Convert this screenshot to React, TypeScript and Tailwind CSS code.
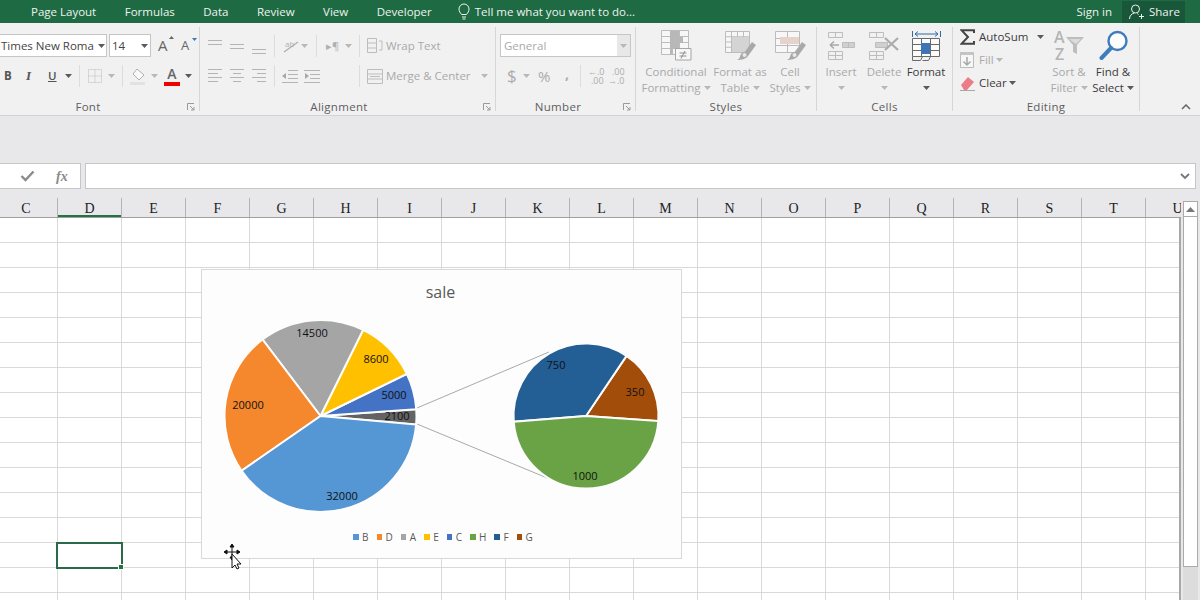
import type { ReactNode } from 'react';

// ── Data ──────────────────────────────────────────────────────────────────────

const TABS = ['Page Layout', 'Formulas', 'Data', 'Review', 'View', 'Developer'];
const COLUMNS = ['D', 'E', 'F', 'G', 'H', 'I', 'J', 'K', 'L', 'M', 'N', 'O', 'P', 'Q', 'R', 'S', 'T', 'U'];

const MAIN_SLICES = [
  { value: 2100, color: '#636363' },
  { value: 5000, color: '#4472c4' },
  { value: 8600, color: '#ffc000' },
  { value: 14500, color: '#a5a5a5' },
  { value: 20000, color: '#f5882c' },
  { value: 32000, color: '#5596d4' },
];
const SIDE_SLICES = [
  { value: 350, color: '#a34d0b' },
  { value: 750, color: '#235e94' },
  { value: 1000, color: '#6aa345' },
];
const MAIN_LABELS = [
  ['14500', 312, 333], ['8600', 376, 359], ['5000', 394, 395], ['2100', 397, 416],
  ['20000', 248, 405], ['32000', 342, 496], ['750', 556, 365], ['350', 635, 392], ['1000', 585, 476],
] as const;
const LEGEND = [
  ['B', '#5596d4'], ['D', '#f5882c'], ['A', '#a5a5a5'], ['E', '#ffc000'],
  ['C', '#4472c4'], ['H', '#6aa345'], ['F', '#235e94'], ['G', '#a34d0b'],
];

// ── Small pieces ──────────────────────────────────────────────────────────────

function Caret({ className = '', dark = false }: { className?: string; dark?: boolean }) {
  return (
    <svg width="7" height="4" viewBox="0 0 7 4" className={`shrink-0 ${className}`}>
      <path d="M0 0h7L3.5 4z" fill={dark ? '#5a5a5a' : '#b8b8b8'} />
    </svg>
  );
}

function Sep() {
  return <div className="h-[22px] w-px shrink-0 bg-[#dcdcdc]" />;
}

function Launcher() {
  return (
    <svg width="8" height="8" viewBox="0 0 8 8" className="absolute right-[4px] bottom-[3px]">
      <path d="M.5 7V.5H7M3 3l4 4M7 4v3H4" fill="none" stroke="#9a9a9a" />
    </svg>
  );
}

function Group({ label, width, labelClass = '', launcher = false, children }: {
  label: string;
  width: string;
  labelClass?: string;
  launcher?: boolean;
  children: ReactNode;
}) {
  return (
    <div className={`h-[84px] shrink-0 border-r border-[#d6d6d6] ${width}`}>
      <div className="flex h-[72px] flex-col">{children}</div>
      <div className={`relative h-[15px] text-center text-[11.5px] leading-[15px] tracking-[0.3px] text-[#5e5e5e] ${labelClass}`}>
        {label}
        {launcher && <Launcher />}
      </div>
    </div>
  );
}

function BigButton({ width, icon, lines, caret = false, dark = false }: {
  width: string;
  icon: ReactNode;
  lines: string[];
  caret?: boolean;
  dark?: boolean;
}) {
  return (
    <div className={`flex shrink-0 flex-col items-center ${width} ${dark ? 'text-[#3c3c3c]' : 'text-[#a9a9a9]'}`}>
      <div className="flex h-[37px] items-center">{icon}</div>
      {lines.map((line, i) => (
        <div key={line} className="flex h-[16px] items-center text-[11.5px] leading-[16px] whitespace-nowrap">
          {line}
          {caret && i === lines.length - 1 && <Caret className="ml-[3px]" dark={dark} />}
        </div>
      ))}
      {lines.length === 1 && (
        <div className="flex h-[16px] items-center"><Caret dark={dark} /></div>
      )}
    </div>
  );
}

function AlignIcon({ kind }: { kind: 'left' | 'center' | 'right' | 'top' | 'middle' | 'bottom' }) {
  const w = kind === 'top' || kind === 'middle' || kind === 'bottom';
  const ys = kind === 'top' ? [2, 6] : kind === 'middle' ? [6, 10] : kind === 'bottom' ? [11, 15] : [1, 5, 9, 13];
  const lines = ys.map((y, i) => {
    const short = !w && i % 2 === 1;
    const x1 = short && kind === 'right' ? 5 : short && kind === 'center' ? 3 : 0;
    const x2 = short && kind === 'left' ? 10 : short && kind === 'center' ? 11 : 14;
    return `M${x1} ${y + 0.5}H${x2}`;
  });
  return (
    <svg width="14" height="16" viewBox="0 0 14 16" className="shrink-0">
      <path d={lines.join('')} stroke="#b4b4b4" fill="none" />
    </svg>
  );
}

// ── Ribbon icons ──────────────────────────────────────────────────────────────

function TableLines({ x, y, w, h, cols, rows, stroke = '#bcbcbc' }: {
  x: number; y: number; w: number; h: number; cols: number; rows: number; stroke?: string;
}) {
  let d = `M${x} ${y}h${w}v${h}h${-w}z`;
  for (let i = 1; i < cols; i++) d += `M${x + (w / cols) * i} ${y}v${h}`;
  for (let i = 1; i < rows; i++) d += `M${x} ${y + (h / rows) * i}h${w}`;
  return <path d={d} fill="#f7f7f7" stroke={stroke} />;
}

function Brush() {
  return (
    <g>
      <path d="M27 11l4 3-8 11-4-3z" fill="#a9a9a9" />
      <path d="M19 21c3 0 4 2 4 4-2 3-7 4-11 4 3-1 3-4 4-6 1-1 2-2 3-2z" fill="#a9a9a9" />
      <circle cx="19.5" cy="24" r="2" fill="#e9e9e9" />
    </g>
  );
}

function ConditionalIcon() {
  return (
    <svg width="31" height="31" viewBox="0 0 31 31">
      <TableLines x={0.5} y={0.5} w={27} h={24} cols={3} rows={4} />
      <path d="M9 1h9v6H9zM9 7h13v6H9zM9 13h9v6H9zM9 19h3v5H9z" fill="#b8b8b8" />
      <path d="M14.500 18.500h15.500v11.500h-15.500z" fill="#f7f7f7" stroke="#a6a6a6" />
      <path d="M18.500 23h7M18.500 26h7M24 21l-4 7.500" stroke="#909090" fill="none" />
    </svg>
  );
}

function FormatTableIcon() {
  return (
    <svg width="31" height="30" viewBox="0 0 31 30">
      <TableLines x={0.5} y={0.5} w={24} h={21} cols={4} rows={4} />
      <path d="M7 6h17v15H7z" fill="#d4d4d4" />
      <Brush />
    </svg>
  );
}

function CellStylesIcon() {
  return (
    <svg width="31" height="30" viewBox="0 0 31 30">
      <TableLines x={0.5} y={0.5} w={24} h={21} cols={2} rows={3} />
      <path d="M5 6h19v7H5z" fill="#e5d3cc" />
      <Brush />
    </svg>
  );
}

function InsertIcon() {
  return (
    <svg width="27" height="28" viewBox="0 0 27 28">
      <path d="M.5.500h14v5h-14zM7.500.500v5" fill="none" stroke="#bdbdbd" />
      <path d="M14.500 10.500h12v5h-12zM20.500 10.500v5" fill="#d0d0d0" stroke="#bdbdbd" />
      <path d="M2 13h9M2 13l4-3.500M2 13l4 3.500" fill="none" stroke="#a8a8a8" strokeWidth="1.500" />
      <path d="M.5 19.500h14v8h-14zM7.500 19.500v8M.5 23.500h14" fill="none" stroke="#bdbdbd" />
    </svg>
  );
}

function DeleteIcon() {
  return (
    <svg width="30" height="28" viewBox="0 0 30 28">
      <path d="M.5.500h14v5h-14zM7.500.500v5" fill="none" stroke="#bdbdbd" />
      <path d="M6.500 10.500h12v5h-12z" fill="#d0d0d0" stroke="#bdbdbd" />
      <path d="M16 6l13 12M29 6L16 18" fill="none" stroke="#ababab" strokeWidth="2.200" />
      <path d="M.5 19.500h14v8h-14zM7.500 19.500v8M.5 23.500h14" fill="none" stroke="#bdbdbd" />
    </svg>
  );
}

function FormatIcon() {
  return (
    <svg width="29" height="33" viewBox="0 0 29 33">
      <path d="M.5 2v6M28.500 2v6" stroke="#2d6ba5" fill="none" />
      <path d="M3 5h23M3 5l3-2.500M3 5l3 2.500M26 5l-3-2.500M26 5l-3 2.500" stroke="#2d6ba5" fill="none" />
      <path d="M.5 9.500h27v18h-27zM9.500 9.500v18M18.500 9.500v18M.5 15.500h27M.5 21.500h27" fill="#fcfcfc" stroke="#6a6a6a" />
      <path d="M9 14h9v11H9z" fill="#3f75b5" />
      <path d="M.5 27.500v4h8l2-4M10.500 31.500h6l2-4" fill="none" stroke="#6a6a6a" />
    </svg>
  );
}

function SortIcon() {
  return (
    <svg width="31" height="33" viewBox="0 0 31 33">
      <text x="0" y="14" fontSize="16" fontWeight="600" fontFamily="Open Sans" fill="#b5b5b5">A</text>
      <text x="1" y="31" fontSize="16" fontWeight="600" fontFamily="Open Sans" fill="#b5b5b5">Z</text>
      <path d="M12 8h18l-7 8v9l-4-2v-7z" fill="#bdbdbd" />
      <path d="M15 10h12l-5 5z" fill="#dcdcdc" />
    </svg>
  );
}

function FindIcon() {
  return (
    <svg width="29" height="32" viewBox="0 0 29 32">
      <circle cx="18.500" cy="11" r="9" fill="#fdfdfd" stroke="#3f7cbc" strokeWidth="2.400" />
      <path d="M12 18L2.500 28" stroke="#3f7cbc" strokeWidth="4" strokeLinecap="round" />
    </svg>
  );
}

// ── Ribbon ────────────────────────────────────────────────────────────────────

function FontGroup() {
  return (
    <Group label="Font" width="w-[200px]" labelClass="pr-[23px]" launcher>
      <div className="mt-[7px] flex h-[23px] items-center">
        <div className="flex h-[23px] w-[107px] shrink-0 items-center border-y border-r border-[#c6c6c6] bg-white pl-[1px] text-[11.5px] text-[#444]">
          <span className="w-[97px] shrink-0 whitespace-nowrap">Times New Roma</span>
          <Caret dark />
        </div>
        <div className="ml-[2px] flex h-[23px] w-[42px] shrink-0 items-center border border-[#c6c6c6] bg-white pl-[2px] text-[11.5px] text-[#444]">
          <span className="w-[29px]">14</span>
          <Caret dark />
        </div>
        <div className="relative ml-[7px] w-[14px] text-[15px] text-[#666]">
          A
          <svg width="5" height="3" className="absolute top-[2px] right-[-2px]"><path d="M0 3h5L2.500 0z" fill="#666" /></svg>
        </div>
        <div className="relative ml-[9px] w-[14px] text-[13px] text-[#666]">
          A
          <svg width="5" height="3" className="absolute top-[2px] right-[-2px]"><path d="M0 0h5L2.500 3z" fill="#3f75b5" /></svg>
        </div>
      </div>
      <div className="mt-[8px] flex h-[22px] items-center text-[12px] text-[#555]">
        <span className="ml-[4px] w-[22px] text-[11.500px] font-bold">B</span>
        <span className="w-[22px] font-['Liberation_Serif'] text-[13px] font-bold italic">I</span>
        <span className="w-[17px] text-[11.500px] font-semibold underline">U</span>
        <Caret dark />
        <div className="ml-[7px]"><Sep /></div>
        <svg width="14" height="14" viewBox="0 0 14 14" className="ml-[8px]"><path d="M.5.500h13v13H.5zM7 .5v13M.5 7h13" fill="none" stroke="#bbb" strokeDasharray="1 1" /></svg>
        <Caret className="ml-[6px]" />
        <div className="ml-[7px]"><Sep /></div>
        <svg width="16" height="17" viewBox="0 0 16 17" className="ml-[7px]"><path d="M7 1l7 6-5 5-6-6z" fill="#fafafa" stroke="#b0b0b0" /><path d="M0 14h15v3H0z" fill="#e2e2e2" /></svg>
        <Caret className="ml-[5px]" />
        <div className="ml-[6px] flex w-[16px] flex-col items-center">
          <span className="text-[14px] leading-[14px] font-semibold text-[#666]">A</span>
          <div className="mt-[1px] h-[4px] w-[16px] bg-[#f00000]" />
        </div>
        <Caret className="ml-[5px]" dark />
      </div>
    </Group>
  );
}

function AlignmentGroup() {
  return (
    <Group label="Alignment" width="w-[296px]" labelClass="pr-[17px]" launcher>
      <div className="mt-[7px] flex h-[23px] items-center pl-[8px]">
        <div className="flex w-[66px] gap-[8px]">
          <AlignIcon kind="top" /><AlignIcon kind="middle" /><AlignIcon kind="bottom" />
        </div>
        <Sep />
        <svg width="16" height="16" viewBox="0 0 16 16" className="ml-[8px]"><path d="M1 14L15 4" stroke="#b0b0b0" strokeWidth="1.400" /><text x="2" y="9" fontSize="8" fontFamily="Open Sans" fill="#b0b0b0">ab</text></svg>
        <Caret className="ml-[2px]" />
        <div className="ml-[8px]"><Sep /></div>
        <span className="ml-[9px] w-[19px] text-[11px] leading-none text-[#b0b0b0]">▸¶</span>
        <Caret />
        <div className="ml-[7px]"><Sep /></div>
        <svg width="16" height="15" viewBox="0 0 16 15" className="ml-[7px]"><path d="M.5.500h9v14h-9zM.5 5h9M.5 10h9M12 3h3v9h-3" fill="none" stroke="#bdbdbd" /></svg>
        <span className="ml-[3px] text-[11.500px] whitespace-nowrap text-[#a9a9a9]">Wrap Text</span>
      </div>
      <div className="mt-[8px] flex h-[22px] items-center pl-[8px]">
        <div className="flex w-[66px] gap-[8px]">
          <AlignIcon kind="left" /><AlignIcon kind="center" /><AlignIcon kind="right" />
        </div>
        <Sep />
        <svg width="38" height="14" viewBox="0 0 38 14" className="ml-[7px]"><path d="M6 1.500h10M6 5.500h10M6 9.500h10M0 13.500h16M22 1.500h16M28 5.500h10M28 9.500h10M22 13.500h16" stroke="#b4b4b4" fill="none" /><path d="M0 7l4-3v6zM27 7l-4-3v6z" fill="#a8a8a8" /></svg>
        <div className="ml-[39px]"><Sep /></div>
        <svg width="16" height="15" viewBox="0 0 16 15" className="ml-[7px]"><path d="M.5.500h15v14H.5zM.5 5h15M.5 10h15M3 7.500h10" fill="none" stroke="#bdbdbd" /></svg>
        <span className="ml-[3px] text-[11.500px] whitespace-nowrap text-[#a9a9a9]">Merge &amp; Center</span>
        <Caret className="ml-[10px]" />
      </div>
    </Group>
  );
}

function NumberGroup() {
  return (
    <Group label="Number" width="w-[140px]" labelClass="pr-[15px]" launcher>
      <div className="mt-[7px] ml-[4px] flex h-[23px] w-[131px] items-center justify-between border border-[#c6c6c6] bg-white pl-[3px] text-[11.5px] text-[#a9a9a9]">
        General
        <div className="flex h-full w-[13px] items-center justify-center bg-[#e8e8e8]"><Caret /></div>
      </div>
      <div className="mt-[8px] flex h-[22px] items-center text-[#acacac]">
        <span className="ml-[11px] w-[15px] text-[17px]">$</span>
        <Caret className="ml-[1px]" />
        <span className="ml-[8px] w-[23px] text-[15px]">%</span>
        <span className="ml-[4px] -mt-[6px] w-[12px] text-[14px] font-bold">,</span>
        <div className="ml-[3px]"><Sep /></div>
        <svg width="38" height="18" viewBox="0 0 38 18" className="ml-[7px]">
          <text x="0" y="8" fontSize="9" fontFamily="Open Sans" fill="#acacac">←.0</text>
          <text x="3" y="17" fontSize="9" fontFamily="Open Sans" fill="#acacac">.00</text>
          <text x="24" y="8" fontSize="9" fontFamily="Open Sans" fill="#acacac">.00</text>
          <text x="20" y="17" fontSize="9" fontFamily="Open Sans" fill="#acacac">→.0</text>
        </svg>
      </div>
    </Group>
  );
}

function EditingGroup() {
  return (
    <Group label="Editing" width="w-[187px]">
      <div className="flex">
        <div className="flex w-[93px] shrink-0 flex-col pt-[1px] pl-[7px] text-[11.5px] text-[#3c3c3c]">
          <div className="flex h-[18px] items-center">
            <svg width="15" height="16" viewBox="0 0 15 16" className="mr-[4px] shrink-0"><path d="M14 4V1.200H1.500L8 8l-6.500 6.800H14V12" fill="none" stroke="#444" strokeWidth="2" /></svg>
            AutoSum
            <Caret className="ml-[9px]" dark />
          </div>
          <div className="mt-[5px] flex h-[18px] items-center text-[#a9a9a9]">
            <svg width="14" height="16" viewBox="0 0 14 16" className="mr-[5px]"><path d="M.5.500h13v15H.5z" fill="#f7f7f7" stroke="#bbb" /><path d="M0 0h14v3H0z" fill="#c4c4c4" /><path d="M7 5v8M3.500 9.500L7 13l3.500-3.500" fill="none" stroke="#a8a8a8" strokeWidth="1.500" /></svg>
            Fill
            <Caret className="ml-[2px]" />
          </div>
          <div className="mt-[5px] flex h-[18px] items-center">
            <svg width="15" height="15" viewBox="0 0 15 15" className="mr-[4px]"><path d="M1 9l7-8 6 5-7 8H4z" fill="#ec7c88" /><path d="M0 14.500h15" stroke="#a8a8a8" /></svg>
            Clear
            <Caret className="ml-[2px]" dark />
          </div>
        </div>
        <BigButton width="w-[46px]" icon={<SortIcon />} lines={['Sort &', 'Filter']} caret />
        <BigButton width="w-[42px]" icon={<FindIcon />} lines={['Find &', 'Select']} caret dark />
      </div>
    </Group>
  );
}

function Ribbon() {
  return (
    <div className="relative flex h-[93px] border-b border-[#d2d2d2] bg-[#f1f1f2] pt-[4px] font-['Open_Sans',sans-serif]">
      <FontGroup />
      <AlignmentGroup />
      <NumberGroup />
      <Group label="Styles" width="w-[181px]">
        <div className="flex pl-[10px]">
          <BigButton width="w-[60px]" icon={<ConditionalIcon />} lines={['Conditional', 'Formatting']} caret />
          <BigButton width="w-[68px]" icon={<FormatTableIcon />} lines={['Format as', 'Table']} caret />
          <BigButton width="w-[32px]" icon={<CellStylesIcon />} lines={['Cell', 'Styles']} caret />
        </div>
      </Group>
      <Group label="Cells" width="w-[136px]">
        <div className="flex pl-[2px]">
          <BigButton width="w-[44px]" icon={<InsertIcon />} lines={['Insert']} />
          <BigButton width="w-[42px]" icon={<DeleteIcon />} lines={['Delete']} />
          <BigButton width="w-[42px]" icon={<FormatIcon />} lines={['Format']} dark />
        </div>
      </Group>
      <EditingGroup />
      <svg width="10" height="6" viewBox="0 0 10 6" className="absolute right-[9px] bottom-[5px]">
        <path d="M1 5l4-4 4 4" fill="none" stroke="#666" strokeWidth="1.500" />
      </svg>
    </div>
  );
}

function TitleBar() {
  return (
    <div className="flex h-[23px] items-center bg-[#1e6b43] font-['Open_Sans',sans-serif] text-[11.5px] text-[#ecf3ef]">
      <div className="flex gap-[28.500px] pl-[31px]">
        {TABS.map((t) => <span key={t} className="whitespace-nowrap">{t}</span>)}
      </div>
      <svg width="12" height="17" viewBox="0 0 12 17" className="ml-[26px]">
        <path d="M3.500 11.500C2 9.500 1 8.500 1 6a5 5 0 0110 0c0 2.500-1 3.500-2.500 5.500zM4 14h4M4.500 16h3" fill="none" stroke="#ecf3ef" />
      </svg>
      <span className="ml-[5px] whitespace-nowrap">Tell me what you want to do...</span>
      <span className="ml-auto">Sign in</span>
      <div className="mr-[15px] ml-[10px] flex h-[22px] w-[63px] items-center bg-[#19573a] pl-[7px]">
        <svg width="15" height="16" viewBox="0 0 15 16" className="mr-[5px]">
          <circle cx="6.500" cy="5" r="4" fill="none" stroke="#ecf3ef" />
          <path d="M.5 15c0-3 2-5.500 5-6M8 9.500c.5 0 1 .5 1.500 1M10 12.500h5M12.500 10v5" fill="none" stroke="#ecf3ef" />
        </svg>
        Share
      </div>
    </div>
  );
}

function FormulaBar() {
  return (
    <div className="flex h-[82px] flex-col bg-[#e8e8ea]">
      <div className="mt-[47px] flex h-[26px] pr-[4px]">
        <div className="flex w-[81px] items-center border-y border-r border-[#c6c6c6] bg-white">
          <svg width="15" height="12" viewBox="0 0 15 12" className="ml-[20px]"><path d="M1.500 6l4 4L13.500 1.500" fill="none" stroke="#8a8a8a" strokeWidth="2.400" /></svg>
          <span className="ml-[21px] font-['Liberation_Serif'] text-[14px] font-semibold text-[#8a8a8a] italic">fx</span>
        </div>
        <div className="ml-[4px] flex flex-1 items-center justify-end border border-[#c6c6c6] bg-white pr-[5px]">
          <svg width="10" height="7" viewBox="0 0 10 7"><path d="M1 1l4 4 4-4" fill="none" stroke="#777" strokeWidth="1.800" /></svg>
        </div>
      </div>
    </div>
  );
}

// ── Chart ─────────────────────────────────────────────────────────────────────

function slicePaths(slices: { value: number; color: string }[], cx: number, cy: number, r: number, startDeg: number) {
  const total = slices.reduce((sum, s) => sum + s.value, 0);
  let angle = startDeg;
  return slices.map((s) => {
    const next = angle + (s.value / total) * 360;
    const x1 = cx + r * Math.cos((angle * Math.PI) / 180);
    const y1 = cy - r * Math.sin((angle * Math.PI) / 180);
    const x2 = cx + r * Math.cos((next * Math.PI) / 180);
    const y2 = cy - r * Math.sin((next * Math.PI) / 180);
    const large = next - angle > 180 ? 1 : 0;
    angle = next;
    return { d: `M${cx} ${cy}L${x1} ${y1}A${r} ${r} 0 ${large} 0 ${x2} ${y2}Z`, color: s.color };
  });
}

function Chart() {
  return (
    <div className="absolute top-[51px] left-[201px] flex h-[290px] w-[481px] flex-col border border-[#d9d9d9] bg-[#fdfdfd] font-['Open_Sans',sans-serif]">
      <div className="h-[40px] shrink-0 pt-[10px] pr-[2px] text-center text-[16px] leading-[24px] text-[#595959]">sale</div>
      <svg width="479" height="216" viewBox="202 310 479 216" className="shrink-0">
        <path d="M417 408L549 352M417 424L552 480" stroke="#a9a9a9" fill="none" />
        {slicePaths(MAIN_SLICES, 320.500, 416, 96, -5.1).map((s) => (
          <path key={s.color} d={s.d} fill={s.color} stroke="#fdfdfd" strokeWidth="2" />
        ))}
        {slicePaths(SIDE_SLICES, 586, 416, 72.500, -4).map((s) => (
          <path key={s.color} d={s.d} fill={s.color} stroke="#fdfdfd" strokeWidth="2" />
        ))}
        {MAIN_LABELS.map(([text, x, y]) => (
          <text key={text} x={x} y={y + 4} textAnchor="middle" fontSize="11" fill="#111">{text}</text>
        ))}
      </svg>
      <div className="mt-[4px] flex justify-center gap-[8px] pl-[3px] text-[10px] leading-[14px] text-[#595959]">
        {LEGEND.map(([name, color]) => (
          <div key={name} className="flex items-center gap-[3.500px]">
            <span className="size-[5.500px]" style={{ backgroundColor: color }} />
            {name}
          </div>
        ))}
      </div>
    </div>
  );
}

// ── Sheet ─────────────────────────────────────────────────────────────────────

function ColumnHeaders() {
  return (
    <div className="flex h-[29px] shrink-0 overflow-hidden border-b border-[#9f9f9f] bg-[#e8e8ea] pt-[9px] font-['Liberation_Serif',serif] text-[14px] leading-[22px] text-[#222]">
      <div className="w-[57px] shrink-0 pr-[5px] text-center">C</div>
      {COLUMNS.map((c) => (
        <div
          key={c}
          className={`w-[64px] shrink-0 border-l border-[#b4b4b4] text-center ${c === 'D' ? 'relative' : ''}`}
        >
          {c}
          {c === 'D' && <div className="absolute right-0 bottom-0 left-0 h-[2px] bg-[#217346]" />}
        </div>
      ))}
    </div>
  );
}

function Grid() {
  return (
    <div className="relative h-[382px] overflow-hidden border-r-2 border-[#a8a8a8] bg-white">
      {Array.from({ length: 16 }).map((_, r) => (
        <div key={r} className="flex h-[25px] border-b border-[#d9d9d9]">
          <div className="w-[57px] shrink-0" />
          {COLUMNS.map((c) => (
            <div key={c} className="w-[64px] shrink-0 border-l border-[#d9d9d9]" />
          ))}
        </div>
      ))}
      <Chart />
      {/* selected cell */}
      <div className="absolute top-[324px] left-[56px] h-[27px] w-[67px] border-2 border-[#2a6a49]">
        <div className="absolute right-[-3px] bottom-[-3px] size-[6px] border border-white bg-[#217346]" />
      </div>
      {/* move cursor */}
      <svg width="20" height="26" viewBox="0 0 20 26" className="absolute top-[326px] left-[224px]">
        <path d="M8 1v14M1 8h14M8 0L6 3h4zM8 16l-2-3h4zM0 8l3-2v4zM16 8l-3-2v4z" fill="#111" stroke="#111" />
        <path d="M8 10v14l3-3 2 4 2-1-2-4h4z" fill="#fff" stroke="#111" />
      </svg>
    </div>
  );
}

function Scrollbar() {
  return (
    <div className="flex w-[19px] shrink-0 flex-col bg-[#e8e8ea] pl-[2px]">
      <div className="mt-[12px] flex h-[16px] w-[15px] items-center justify-center border border-[#ababab] bg-white">
        <svg width="9" height="5"><path d="M0 5h9L4.500 0z" fill="#777" /></svg>
      </div>
      <div className="h-[350px] w-[15px] border-x border-b border-[#ababab] bg-white" />
      <div className="w-[15px] flex-1 bg-[#dcdcdc]" />
    </div>
  );
}

export default function App() {
  return (
    <div className="h-[600px] w-[1200px] overflow-hidden bg-white">
      <TitleBar />
      <Ribbon />
      <FormulaBar />
      <div className="-mt-[9px] flex h-[411px]">
        <div className="flex min-w-0 flex-1 flex-col">
          <ColumnHeaders />
          <Grid />
        </div>
        <Scrollbar />
      </div>
    </div>
  );
}
